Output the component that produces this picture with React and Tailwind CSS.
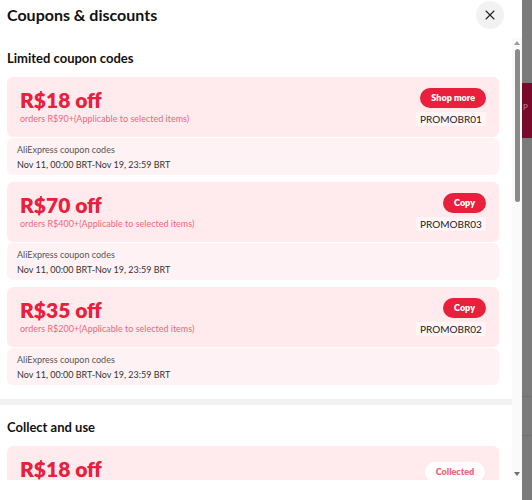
import { X } from "lucide-react";

const limited = [
  { amount: "R$18 off", min: "orders R$90+(Applicable to selected items)", code: "PROMOBR01", action: "Shop more" },
  { amount: "R$70 off", min: "orders R$400+(Applicable to selected items)", code: "PROMOBR03", action: "Copy" },
  { amount: "R$35 off", min: "orders R$200+(Applicable to selected items)", code: "PROMOBR02", action: "Copy" },
];

const CouponCard = ({ coupon }) => (
  <div className="flex flex-col gap-px">
    <div className="h-[60px] rounded-[6px] bg-[#ffebee] flex justify-between pl-[13px] pr-[13px]">
      <div className="pt-[11px]">
        <div className="text-[21px] leading-[24px] font-extrabold text-[#e8203c]">{coupon.amount}</div>
        <div className="text-[9px] leading-[14px] text-[#f0677b]">{coupon.min}</div>
      </div>
      <div className="pt-[11px] flex flex-col items-end">
        <button className="h-[20px] px-[11px] rounded-full bg-[#e8203c] text-white text-[9px] font-extrabold">
          {coupon.action}
        </button>
        <div className="mt-[4px] h-[14px] w-[70px] bg-[#fff5f7] text-[10px] leading-[14px] text-[#222] text-center">
          {coupon.code}
        </div>
      </div>
    </div>
    <div className="h-[37px] rounded-[6px] bg-[#fff2f4] pl-[10px] pt-[4px] text-[9px] leading-[15px]">
      <div className="text-[#555]">AliExpress coupon codes</div>
      <div className="text-[#333]">Nov 11, 00:00 BRT-Nov 19, 23:59 BRT</div>
    </div>
  </div>
);

export default function App() {
  return (
    <div className="w-[532px] h-[500px] flex overflow-hidden bg-white" style={{ fontFamily: "Lato, 'Open Sans', sans-serif" }}>
      <div className="w-[522px] h-[500px] bg-white flex flex-col">
        <div className="h-[38px] flex items-start justify-between pl-[7px] pr-[18px]">
          <h1 className="pt-[4px] text-[16px] leading-[22px] font-bold text-[#111]">Coupons &amp; discounts</h1>
          <button className="mt-[1px] w-[28px] h-[28px] rounded-full bg-[#f2f2f2] flex items-center justify-center text-[#222]">
            <X size={16} strokeWidth={1.6} />
          </button>
        </div>
        <div className="h-[442px] flex">
          <div className="w-[512px] overflow-hidden">
            <div className="pt-[10px] px-[7px] pr-[13px]">
              <h2 className="text-[13px] leading-[20px] font-bold text-[#111] mb-[9px]">Limited coupon codes</h2>
              <div className="flex flex-col gap-[7px]">
                {limited.map((c) => (
                  <CouponCard key={c.code} coupon={c} />
                ))}
              </div>
            </div>
            <div className="mt-[14px] h-[6px] bg-[#f2f2f2]" />
            <div className="pt-[12px] px-[7px] pr-[13px]">
              <h2 className="text-[13px] leading-[20px] font-bold text-[#111] mb-[9px]">Collect and use</h2>
              <div className="h-[60px] rounded-[6px] bg-[#ffebee] flex justify-between pl-[13px] pr-[14px]">
                <div className="pt-[11px] text-[21px] leading-[24px] font-extrabold text-[#e8203c]">R$18 off</div>
                <div className="pt-[11px]">
                  <button className="h-[20px] w-[60px] rounded-full bg-white text-[#f0677b] text-[9px] font-extrabold">
                    Collected
                  </button>
                </div>
              </div>
            </div>
          </div>
          <div className="w-[10px] bg-[#fafafa] flex flex-col items-center">
            <div className="mt-[3px] w-0 h-0 border-l-[3px] border-r-[3px] border-b-[4px] border-l-transparent border-r-transparent border-b-[#9a9a9a]" />
            <div className="mt-[4px] w-[5px] h-[153px] rounded-full bg-[#8a8a8a]" />
            <div className="mt-auto mb-[4px] w-0 h-0 border-l-[3px] border-r-[3px] border-t-[4px] border-l-transparent border-r-transparent border-t-[#6f6f6f]" />
          </div>
        </div>
      </div>
      <div className="flex-1 bg-[#7b7b7b] flex flex-col">
        <div className="mt-[83px] h-[55px] bg-[#7a0a2c] text-[#b98a96] text-[8px] leading-[12px] pt-[18px] pl-px">
          P
        </div>
        <div className="mt-[258px] h-px bg-[#707070]" />
        <div className="mt-[38px] h-px bg-[#707070]" />
      </div>
    </div>
  );
}
